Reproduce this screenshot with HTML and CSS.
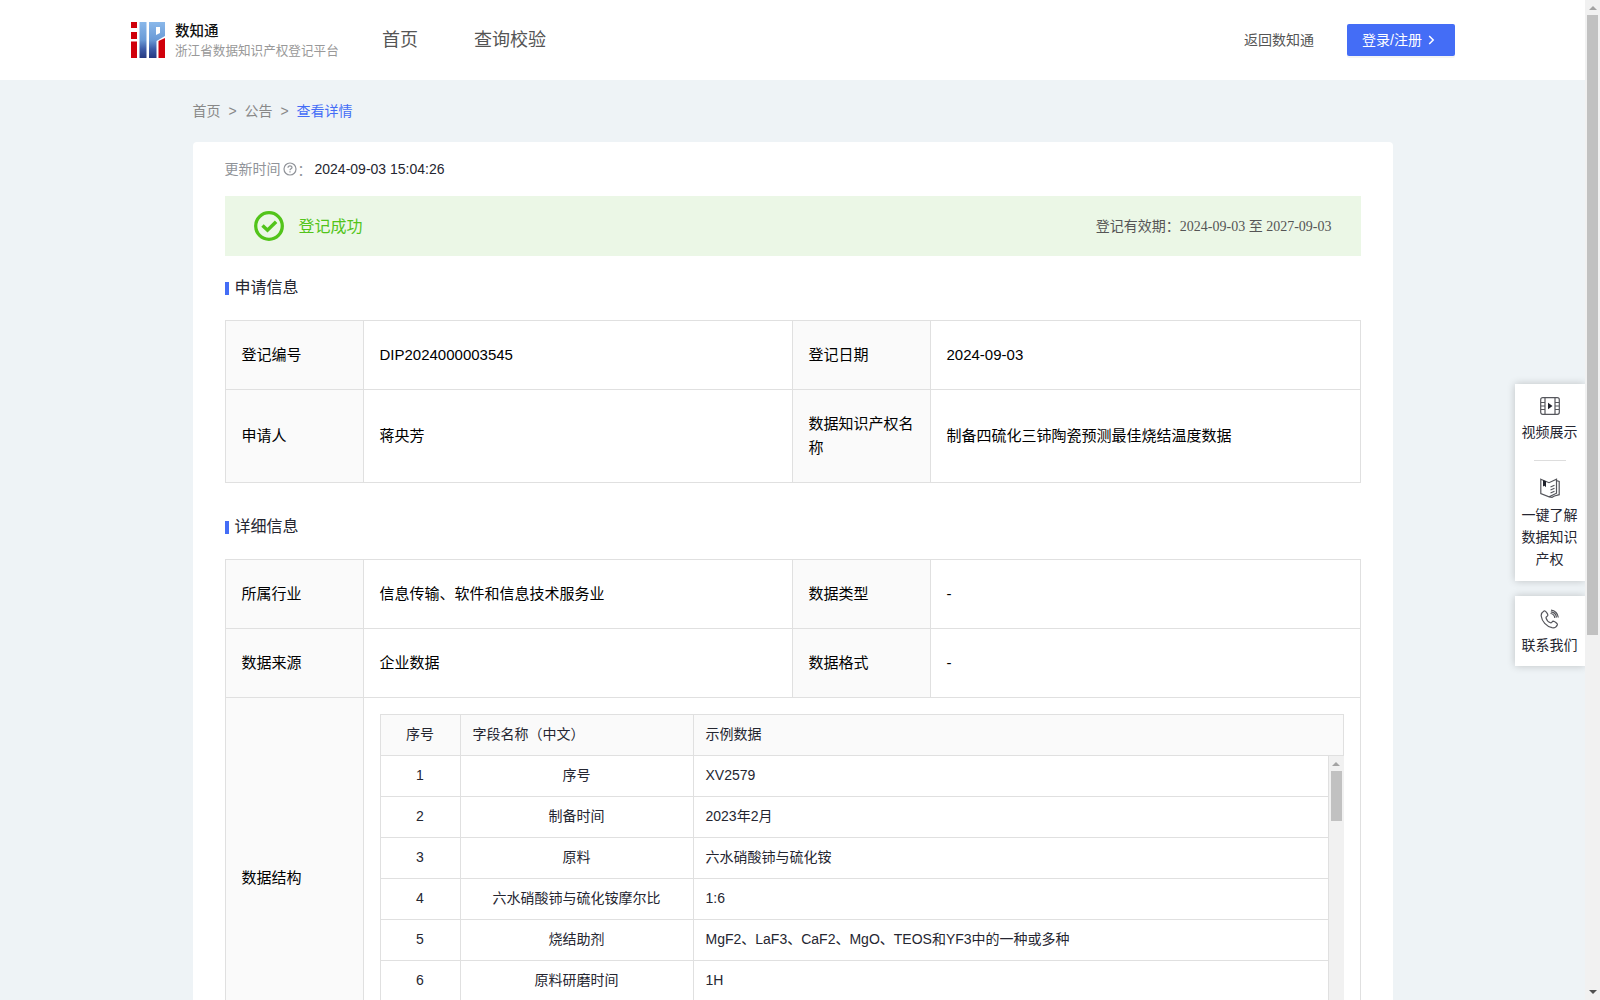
FILE: index.html
```html
<!DOCTYPE html>
<html lang="zh-CN">
<head>
    <meta charset="UTF-8">
    <meta name="viewport" content="width=device-width, initial-scale=1.0">
    <title>浙江省数据知识产权登记平台</title>
    <link rel="stylesheet" href="styles.css">
</head>
<body>
    <div class="page">
        <div class="header">
            <svg class="logo" width="34" height="36" viewBox="0 0 34 36">
                <defs>
                    <linearGradient id="blue" x1="0" y1="0" x2="0" y2="1">
                        <stop offset="0" stop-color="#8ab8ea"/>
                        <stop offset="0.5" stop-color="#6a9ad6"/>
                        <stop offset="0.75" stop-color="#3d5ca8"/>
                        <stop offset="1" stop-color="#263880"/>
                    </linearGradient>
                </defs>
                <path fill="#d0000b" d="M0 0h6v6H0zM0 10h6v7H0zM0 19.500h6V36H0zM27.500 19l6.500-3V36h-6.500z"/>
                <path fill="url(#blue)" d="M8.500 0h7v36h-7zM18 0H34v14l-8.500 5V36H18zM25 5v8l4-2V5z" fill-rule="evenodd"/>
            </svg>
            <div class="brand">
                <div class="brand-name">数知通</div>
                <div class="brand-sub">浙江省数据知识产权登记平台</div>
            </div>
            <div class="nav">
                <span>首页</span>
                <span>查询校验</span>
            </div>
            <div class="header-right">
                <span class="back">返回数知通</span>
                <button class="btn"><span>登录/注册</span><svg width="7" height="10" viewBox="0 0 7 10"><path d="M1.200 1l4 4-4 4" fill="none" stroke="#fff" stroke-width="1.500"/></svg></button>
            </div>
        </div>

        <div class="container">
            <div class="breadcrumb">
                <span>首页</span><i>&gt;</i><span>公告</span><i>&gt;</i><span class="current">查看详情</span>
            </div>

            <div class="card">
                <div class="update-time">
                    <span class="label">更新时间</span>
                    <svg width="14" height="14" viewBox="0 0 14 14" fill="none" stroke="#909399"><circle cx="7" cy="7" r="6" stroke-width="1.200"/><path d="M5 5.700c0-2.500 4-2.500 4-.2 0 1.300-2 1.300-2 2.700M7 9.300v1.300" stroke-width="1.200"/></svg>
                    <span class="colon">：</span>
                    <span class="time">2024-09-03 15:04:26</span>
                </div>

                <div class="status">
                    <svg width="30" height="30" viewBox="0 0 30 30" fill="none" stroke="#52c41a"><circle cx="15" cy="15" r="13.300" stroke-width="3.300"/><path d="M8.500 14.500l5 4.700 8.600-8.400" stroke-width="3.500"/></svg>
                    <span class="status-text">登记成功</span>
                    <span class="period">登记有效期：<span class="period-date">2024-09-03 至 2027-09-03</span></span>
                </div>

                <h3 class="title"><span>申请信息</span></h3>
                <table class="info">
                    <colgroup><col class="c1"><col class="c2"><col class="c1"><col></colgroup>
                    <tr>
                        <th>登记编号</th><td>DIP2024000003545</td>
                        <th>登记日期</th><td>2024-09-03</td>
                    </tr>
                    <tr>
                        <th>申请人</th><td>蒋央芳</td>
                        <th>数据知识产权名称</th><td>制备四硫化三铈陶瓷预测最佳烧结温度数据</td>
                    </tr>
                </table>

                <h3 class="title"><span>详细信息</span></h3>
                <table class="info">
                    <colgroup><col class="c1"><col class="c2"><col class="c1"><col></colgroup>
                    <tr>
                        <th>所属行业</th><td>信息传输、软件和信息技术服务业</td>
                        <th>数据类型</th><td>-</td>
                    </tr>
                    <tr>
                        <th>数据来源</th><td>企业数据</td>
                        <th>数据格式</th><td>-</td>
                    </tr>
                    <tr>
                        <th>数据结构</th>
                        <td colspan="3" class="struct">
                            <div class="grid">
                                <div class="row head"><div>序号</div><div>字段名称（中文）</div><div>示例数据</div></div>
                                <div class="grid-body">
                                    <div class="rows">
                                        <div class="row"><div>1</div><div>序号</div><div>XV2579</div></div>
                                        <div class="row"><div>2</div><div>制备时间</div><div>2023年2月</div></div>
                                        <div class="row"><div>3</div><div>原料</div><div>六水硝酸铈与硫化铵</div></div>
                                        <div class="row"><div>4</div><div>六水硝酸铈与硫化铵摩尔比</div><div>1:6</div></div>
                                        <div class="row"><div>5</div><div>烧结助剂</div><div>MgF2、LaF3、CaF2、MgO、TEOS和YF3中的一种或多种</div></div>
                                        <div class="row"><div>6</div><div>原料研磨时间</div><div>1H</div></div>
                                    </div>
                                    <div class="scrollbar">
                                        <div class="arrow-up"></div>
                                        <div class="thumb thumb-small"></div>
                                    </div>
                                </div>
                            </div>
                        </td>
                    </tr>
                </table>
            </div>
        </div>
    </div>

    <div class="side">
        <div class="side-box">
            <div class="side-item">
                <svg width="20" height="18" viewBox="0 0 20 18" fill="none" stroke="#55565c" stroke-width="1.200"><rect x=".7" y=".7" width="18.600" height="16.600" rx="2"/><path d="M5 1v16M15 1v16M1 5.500h4M1 9h4M1 12.500h4M15 5.500h4M15 9h4M15 12.500h4"/><path d="M8 5.700v6.600L12.500 9z" fill="#1f212b" stroke="none"/></svg>
                <span>视频展示</span>
            </div>
            <div class="line"></div>
            <div class="side-item book">
                <svg width="20" height="20" viewBox="0 0 20 20" fill="none" stroke="#55565c" stroke-width="1.200"><path d="M.8 1.200l8.200 3.500 7.500-3.500v14L9 18.800.8 15.500zM17 2.700l2.200.8v13.200l-4.700 1.300-2.500 1.300-3-.5"/><path d="M10.500 9l4-1.700M10.500 12l4-1.700M10.500 15l4-1.700"/><path d="M3 2l3 1.200v6L4.500 7.800 3 8.500z" fill="#1f212b" stroke="none"/></svg>
                <span>一键了解数据知识产权</span>
            </div>
        </div>
        <div class="side-box">
            <div class="side-item phone">
                <svg width="20" height="20" viewBox="0 0 20 20" fill="none" stroke="#55565c" stroke-width="1.200"><path d="M4 2C1.500 3.500 1 5 1.200 7c.8 5.500 5 10.500 10.800 11.700 2.500.4 4.500-.7 5.400-3 .3-1-3-3.500-4.200-3.500-1.200.2-1.500 2-2.700 1.600-2-.8-4-3-4.500-5 0-1.200 1.700-1.300 1.900-2.600C7.900 5 5.500 1.300 4 2z"/><path d="M10.500 4.500c2.300.2 4 2 4.300 4.500M11 1.200c4 .2 7 3.400 7.300 7.300M10.800 2.900c3 .2 5.300 2.400 5.700 5.600"/></svg>
                <span>联系我们</span>
            </div>
        </div>
    </div>

    <div class="scrollbar">
        <div class="arrow-up"></div>
        <div class="thumb thumb-page"></div>
        <div class="arrow-down"></div>
    </div>
</body>
</html>
```

FILE: styles.css
```css
* { box-sizing: border-box; }
body { margin: 0; height: 1000px; overflow: hidden; display: flex; background: #eef3f6; color: #252631; font-family: "Liberation Sans", "Noto Sans CJK SC", sans-serif; font-size: 14px; }
svg { display: block; flex: none; }
.page { flex: 1; min-width: 0; height: 1000px; overflow: hidden; }

/* header */
.header { height: 80px; padding: 0 130px 0 131px; background: #fff; display: flex; align-items: center; }
.brand { margin-left: 10px; white-space: nowrap; width: 164px; }
.brand-name { font-size: 14.5px; line-height: 20px; color: #111; font-weight: 500; }
.brand-sub { font-size: 12.6px; line-height: 18px; color: #999; padding-top: 1px; }
.nav { margin-left: 43px; display: flex; gap: 56px; font-size: 18px; line-height: 24px; color: #555; }
.header-right { margin-left: auto; display: flex; align-items: center; gap: 33px; }
.back { color: #555; padding-bottom: 2px; }
.btn { display: flex; align-items: center; gap: 6px; width: 108px; height: 32px; padding: 0 0 0 15px; border: none; border-radius: 2px; background: #446df6; color: #fff; font-family: inherit; font-size: 14px; box-shadow: 0 2px 0 rgba(0,0,0,0.045); }
.btn span { padding-bottom: 3px; }
.btn svg { margin-bottom: 1px; }

.container { width: 1200px; margin: 0 auto; }
.breadcrumb { height: 62px; padding-bottom: 1px; display: flex; align-items: center; color: #888; line-height: 20px; }
.breadcrumb i { font-style: normal; width: 24px; text-align: center; }
.breadcrumb .current { color: #446df6; }

.card { background: #fff; border-radius: 4px; padding: 16px 32px 60px; }
.update-time { display: flex; align-items: center; height: 22px; color: #909399; }
.update-time .label { padding-bottom: 2px; }
.update-time svg { margin-left: 2px; }
.update-time .colon { width: 18px; padding-left: 1px; }
.update-time .time { color: #252631; }

.status { display: flex; align-items: center; height: 60px; margin-top: 16px; padding: 0 29px; background: #ebf7e6; }
.status-text { margin-left: 15px; padding-bottom: 3px; font-size: 16px; color: #52c41a; }
.period { margin-left: auto; padding-bottom: 3px; color: #555; }
.period-date { font-family: "Liberation Serif", "Noto Sans CJK SC", serif; }

.title { display: flex; align-items: center; height: 24px; margin: 19px 0 21px; font-size: 16px; font-weight: normal; }
.title::before { content: ""; width: 4px; height: 13px; margin: 2px 6px 0 0; background: #446df6; }
.title span { padding-bottom: 3px; }

/* info tables */
.info { width: 1136px; border-collapse: collapse; table-layout: fixed; font-size: 15px; line-height: 24px; color: #000; }
.info + .title { margin-top: 31px; }
.c1 { width: 138px; }
.c2 { width: 429px; }
.info th, .info td { border: 1px solid #e0e0e0; padding: 22px 14px 22px 16px; text-align: left; font-weight: normal; }
.info th { background: #fafafa; }
.info .struct { padding: 16px; height: 361px; vertical-align: top; }

/* field list */
.grid { height: 328px; overflow: hidden; border-top: 1px solid #e0e0e0; font-size: 14px; color: #252631; }
.row { display: grid; grid-template-columns: 80px 233px 1fr; height: 41px; line-height: 39px; border-bottom: 1px solid #e0e0e0; }
.row div { border-left: 1px solid #e0e0e0; text-align: center; white-space: nowrap; }
.row div:nth-child(3) { text-align: left; padding-left: 12px; }
.head { background: #fafafa; border-right: 1px solid #e0e0e0; }
.head div:nth-child(2) { text-align: left; padding-left: 12px; }
.grid-body { display: flex; height: 286px; overflow: hidden; }
.rows { flex: 1; border-right: 1px solid #e0e0e0; }

/* scrollbars */
.scrollbar { flex: none; width: 15px; background: #f1f1f1; display: flex; flex-direction: column; align-items: center; }
.arrow-up { height: 15px; padding-top: 6px; }
.arrow-up::before { content: ""; display: block; border: 4px solid transparent; border-top: 0; border-bottom: 4px solid #a3a3a3; }
.arrow-down { height: 15px; margin-top: auto; padding-top: 5px; }
.arrow-down::before { content: ""; display: block; border: 4px solid transparent; border-bottom: 0; border-top: 4px solid #505050; }
.thumb { width: 11px; background: #c1c1c1; }
.thumb-small { height: 50px; }
.thumb-page { height: 620px; }

/* floating menu */
.side { position: absolute; top: 384px; left: 1515px; width: 70px; display: flex; flex-direction: column; gap: 15px; clip-path: inset(-12px 0 -12px -12px); }
.side-box { background: #fff; box-shadow: 0 0 8px rgba(0,0,0,0.2); }
.side-item { display: flex; flex-direction: column; align-items: center; padding: 13px 7px 17px; line-height: 22px; text-align: center; }
.side-item span { width: 57px; margin-top: 6px; padding-right: 1px; }
.side-item.book { padding: 17px 6px 11px; }
.side-item.phone { padding: 13px 7px 10px; height: 70px; }
.side-item.phone span { margin-top: 5px; }
.line { width: 32px; height: 1px; margin: 0 auto; background: #ddd; }
```
